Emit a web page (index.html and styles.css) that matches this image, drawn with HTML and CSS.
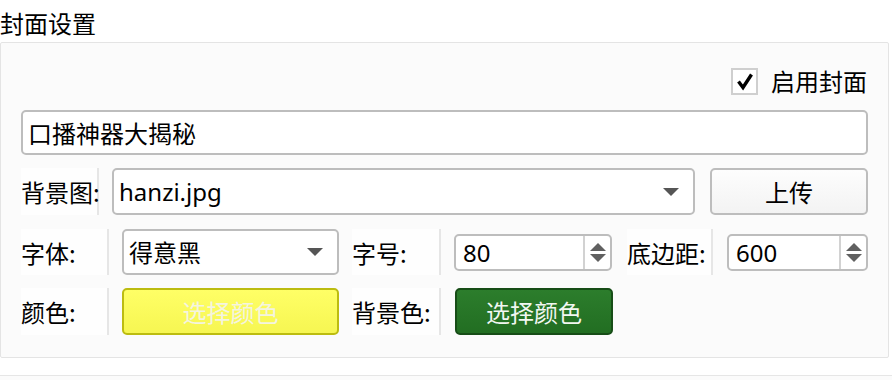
FILE: index.html
```html
<!DOCTYPE html>
<html lang="zh">
<head>
<meta charset="utf-8">
<link rel="stylesheet" href="styles.css">
</head>
<body>
<div class="title">封面设置</div>
<div class="group">
  <div class="row-check">
    <span class="checkbox">
      <svg width="20" height="20" viewBox="0 0 20 20"><path d="M3.5 10.5 L8 16.5 L16.5 3.5" fill="none" stroke="#000" stroke-width="3.4" stroke-linejoin="miter" stroke-linecap="butt"/></svg>
    </span>
    <span class="check-label">启用封面</span>
  </div>
  <div class="textinput">口播神器大揭秘</div>
  <div class="row row2">
    <div class="label w77">背景图:</div>
    <div class="select w584"><span>hanzi.jpg</span><i class="tri"></i></div>
    <div class="btn upload">上传</div>
  </div>
  <div class="row row3">
    <div class="label w87">字体:</div>
    <div class="select w217 h46"><span>得意黑</span><i class="tri"></i></div>
    <div class="label w89 ml13">字号:</div>
    <div class="spin w158 ml13"><span>80</span><div class="arrows"><i class="up"></i><i class="down"></i></div></div>
    <div class="label w86 ml15">底边距:</div>
    <div class="spin w141 ml14"><span>600</span><div class="arrows"><i class="up"></i><i class="down"></i></div></div>
  </div>
  <div class="row row4">
    <div class="label w87">颜色:</div>
    <div class="btn yellow">选择颜色</div>
    <div class="label w89 ml13">背景色:</div>
    <div class="btn green">选择颜色</div>
  </div>
</div>
<div class="next"></div>
</body>
</html>
```
FILE: styles.css
```css
* { box-sizing: border-box; }
html, body { margin: 0; padding: 0; background: #ffffff; }
body {
  width: 892px;
  height: 380px;
  overflow: hidden;
  font-family: "Noto Sans", "Noto Sans CJK SC", sans-serif;
  font-size: 24px;
  color: #000;
}
.title {
  height: 42px;
  padding-top: 6px;
  line-height: 34px;
  font-family: "Noto Sans CJK SC", sans-serif;
  font-size: 24px;
}
.group {
  width: 889px;
  height: 316px;
  background: #fbfbfb;
  border: 1px solid #e4e4e4;
  border-radius: 2px;
  padding: 25px 20px 0 20px;
  display: flex;
  flex-direction: column;
}
.row-check {
  height: 26px;
  display: flex;
  justify-content: flex-end;
  align-items: center;
  padding-right: 1px;
}
.checkbox {
  width: 27px;
  height: 27px;
  border: 2px solid #cfcfcf;
  background: #fff;
  display: flex;
  align-items: center;
  justify-content: center;
}
.check-label {
  margin-left: 13px;
  font-family: "Noto Sans CJK SC", sans-serif;
  line-height: 26px;
}
.textinput {
  margin-top: 16px;
  height: 45px;
  width: 847px;
  background: #fff;
  border: 2px solid #bdbdbd;
  border-radius: 5px;
  padding-left: 5px;
  line-height: 41px;
  font-family: "Noto Sans CJK SC", sans-serif;
}
.row { display: flex; align-items: center; }
.row2 { margin-top: 13px; height: 47px; }
.row3 { margin-top: 14px; height: 46px; }
.row4 { margin-top: 13px; height: 47px; }
.label {
  align-self: stretch;
  display: flex;
  align-items: center;
  background: #fefefe;
  border-right: 2px solid #e6e6e6;
  font-family: "Noto Sans CJK SC", sans-serif;
  white-space: nowrap;
}
.w77 { width: 78px; }
.w87 { width: 88px; }
.w89 { width: 89px; }
.w86 { width: 86px; }
.ml13 { margin-left: 13px; }
.ml14 { margin-left: 14px; }
.ml15 { margin-left: 15px; }
.select {
  margin-left: 13px;
  height: 47px;
  background: #fff;
  border: 2px solid #bdbdbd;
  border-radius: 5px;
  display: flex;
  align-items: center;
  justify-content: space-between;
  padding: 0 14px 0 5px;
}
.select span { line-height: 43px; }
.w584 { width: 584px; }
.w217 { width: 217px; }
.h46 { height: 46px; }
.tri {
  width: 0; height: 0;
  border-left: 8px solid transparent;
  border-right: 8px solid transparent;
  border-top: 8px solid #555;
}
.btn {
  display: flex;
  align-items: center;
  justify-content: center;
  border-radius: 5px;
  font-family: "Noto Sans CJK SC", sans-serif;
}
.upload {
  margin-left: 15px;
  width: 158px;
  height: 47px;
  border: 2px solid #bdbdbd;
  background: linear-gradient(#fdfdfd, #f3f3f3);
}
.spin {
  height: 37px;
  background: #fff;
  border: 2px solid #bdbdbd;
  border-radius: 5px;
  display: flex;
  align-items: stretch;
  justify-content: space-between;
}
.spin span { padding-left: 7px; line-height: 33px; }
.w158 { width: 158px; }
.w141 { width: 141px; }
.arrows {
  width: 27px;
  border-left: 2px solid #d2d2d2;
  display: flex;
  flex-direction: column;
  align-items: center;
  justify-content: center;
  gap: 3px;
}
.arrows .up {
  width: 0; height: 0;
  border-left: 8px solid transparent;
  border-right: 8px solid transparent;
  border-bottom: 8px solid #606060;
}
.arrows .down {
  width: 0; height: 0;
  border-left: 8px solid transparent;
  border-right: 8px solid transparent;
  border-top: 8px solid #606060;
}
.yellow {
  margin-left: 13px;
  width: 217px;
  height: 47px;
  border: 2px solid #bcbc10;
  background: linear-gradient(#ffff66, #f6f652);
  color: #f4f4e0;
}
.green {
  margin-left: 14px;
  width: 158px;
  height: 47px;
  border: 2px solid #174d17;
  background: linear-gradient(#2c7d2c, #226e22);
  color: #f2f7f2;
}
.next {
  margin-top: 17px;
  height: 10px;
  border-top: 1px solid #e6e6e6;
  background: #fbfbfb;
}
```
